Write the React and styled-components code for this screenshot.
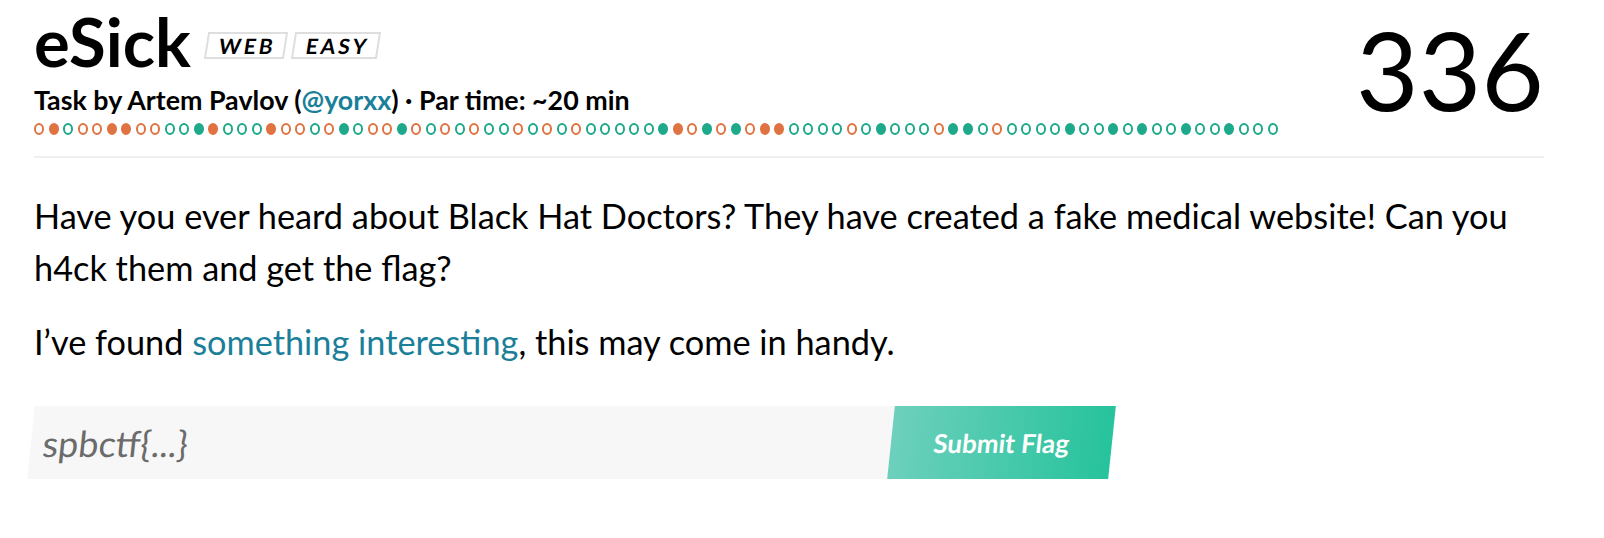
import styled, { createGlobalStyle } from 'styled-components';

const GlobalStyle = createGlobalStyle`
  body {
    margin: 0;
    background: #fff;
    color: #000;
    font-family: Lato, "Open Sans", sans-serif;
  }
`

const Page = styled.div`
  width: 1510px;
  padding: 8px 0 0 34px;
`

const Header = styled.header`
  display: flex;
  justify-content: space-between;
  align-items: flex-start;
  padding-bottom: 21px;
  border-bottom: 2px solid #efefef;
`

const TitleRow = styled.div`
  display: flex;
  align-items: flex-start;
  gap: 7px;
`

const Title = styled.h1`
  margin: 0 8px 0 0;
  font-size: 67px;
  line-height: 66px;
  font-weight: 700;
`

const Badge = styled.span`
  margin-top: 24px;
  height: 23px;
  padding: 0 8px 0 11px;
  border: 2px solid #dedede;
  transform: skewX(-9deg);
  font-size: 21px;
  line-height: 23px;
  font-weight: 700;
  letter-spacing: 3px;
`

const Subtitle = styled.div`
  margin-top: 11px;
  font-size: 26.8px;
  line-height: 30px;
  font-weight: 700;
`

const Handle = styled.a`
  color: #1b7f99;
  text-decoration: none;
`

const Dots = styled.div`
  display: flex;
  gap: 4.52px;
  margin-top: 8px;
`

const Dot = styled.span`
  box-sizing: border-box;
  width: 10px;
  height: 11.5px;
  border-radius: 50%;
  border: 2px solid ${p => p.$color};
  background: ${p => (p.$filled ? p.$color : 'transparent')};
`

const Score = styled.div`
  margin-top: 7px;
  font-size: 108px;
  line-height: 108px;
  font-weight: 400;
`

const Text = styled.p`
  margin: ${p => p.$top}px 0 0 0;
  font-size: 34.3px;
  line-height: 52px;
`

const TextLink = styled.a`
  color: #1b7f99;
  text-decoration: none;
`

const FlagForm = styled.form`
  display: flex;
  margin: 38px 0 0 -3px;
  width: 1081px;
  height: 73px;
  transform: skewX(-6deg);
`

const FlagInput = styled.input`
  box-sizing: border-box;
  width: 860px;
  height: 100%;
  border: none;
  outline: none;
  background: #f7f7f7;
  padding: 0 0 0 12px;
  font-family: Lato, sans-serif;
  font-size: 36px;
  color: #333;

  &::placeholder {
    color: #6b6b6b;
  }
`

const SubmitButton = styled.button`
  width: 221px;
  height: 100%;
  border: none;
  background: linear-gradient(90deg, #6dd0bd 0%, #26c39c 100%);
  color: #fff;
  font-family: Lato, sans-serif;
  font-size: 26px;
  font-weight: 700;
  cursor: pointer;
`

const COLORS = { o: '#e07342', t: '#1fa98b' };

const DOTS =
  'oOtooOOoottTOtttOootoT' +
  'tooTototottototottttttT'.slice(0, 16) + 'tttttT' +
  'OoToToOOttttotTtttoTTt' +
  'ottttTttTtTttTttTttt';

function App() {
  return (
    <Page>
      <GlobalStyle />
      <Header>
        <div>
          <TitleRow>
            <Title>eSick</Title>
            <Badge>WEB</Badge>
            <Badge>EASY</Badge>
          </TitleRow>
          <Subtitle>
            Task by Artem Pavlov (<Handle href="#">@yorxx</Handle>) · Par time: ~20 min
          </Subtitle>
          <Dots>
            {DOTS.split('').map((c, i) => (
              <Dot key={i} $color={COLORS[c.toLowerCase()]} $filled={c === c.toUpperCase()} />
            ))}
          </Dots>
        </div>
        <Score>336</Score>
      </Header>

      <Text $top={32}>
        Have you ever heard about Black Hat Doctors? They have created a fake medical website! Can you h4ck them and get the flag?
      </Text>
      <Text $top={22}>
        I’ve found <TextLink href="#">something interesting</TextLink>, this may come in handy.
      </Text>

      <FlagForm onSubmit={e => e.preventDefault()}>
        <FlagInput placeholder="spbctf{...}" />
        <SubmitButton type="submit">Submit Flag</SubmitButton>
      </FlagForm>
    </Page>
  );
}

export default App;
